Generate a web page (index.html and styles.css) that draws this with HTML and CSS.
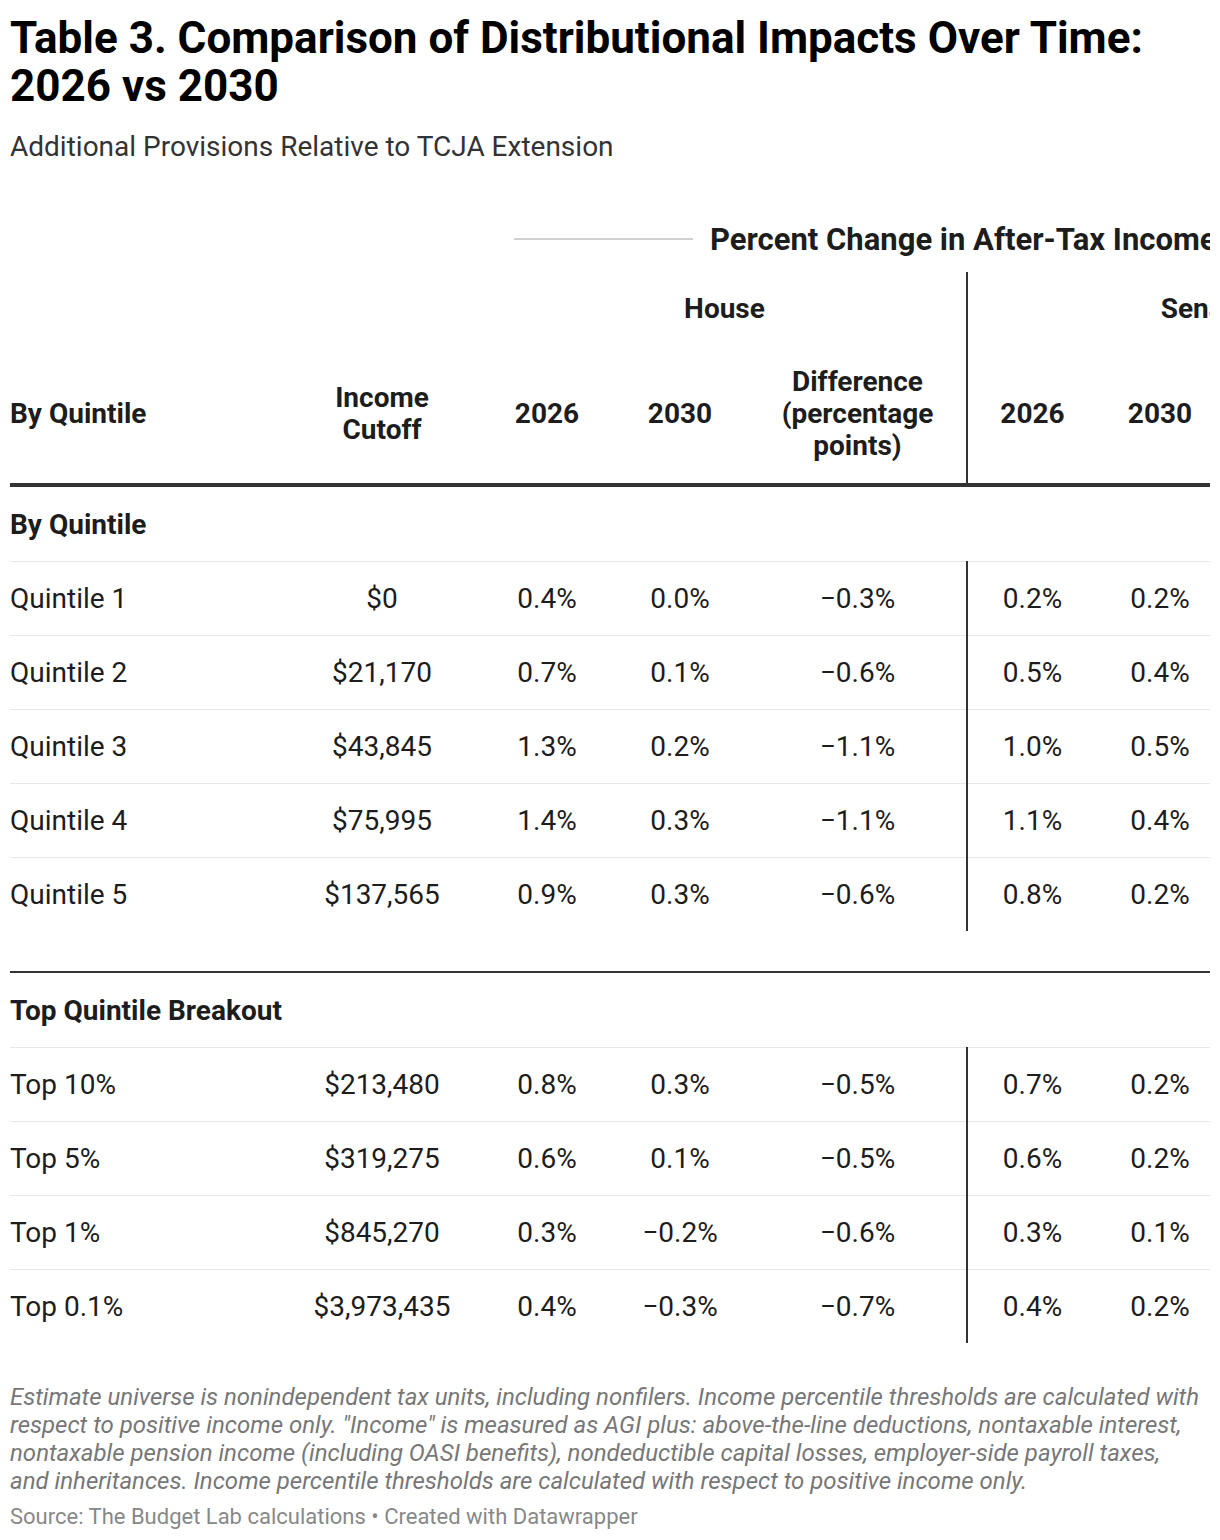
FILE: index.html
```html
<!DOCTYPE html>
<html lang="en">
<head>
<meta charset="utf-8">
<title>Table 3</title>
<link rel="stylesheet" href="styles.css">
</head>
<body>
<div class="chart">
  <h1 class="title">Table 3. Comparison of Distributional Impacts Over Time: 2026 vs 2030</h1>
  <p class="subtitle">Additional Provisions Relative to TCJA Extension</p>
  <div class="table-wrap">
    <table class="dt">
      <colgroup>
        <col class="w1"><col class="w2"><col class="w3"><col class="w4"><col class="w5"><col class="w6"><col class="w7"><col class="w8">
      </colgroup>
      <thead>
        <tr class="spanrow">
          <th colspan="2"></th>
          <th colspan="6" class="spanner"><div class="spanner-inner"><span class="sline sline-l"></span><span class="stext">Percent Change in After-Tax Income</span><span class="sline sline-r"></span></div></th>
        </tr>
        <tr class="grouprow">
          <th colspan="2"></th>
          <th colspan="3" class="c">House</th>
          <th colspan="3" class="c div">Senate</th>
        </tr>
        <tr class="colrow">
          <th class="l">By Quintile</th>
          <th class="c">Income<br>Cutoff</th>
          <th class="c">2026</th>
          <th class="c">2030</th>
          <th class="c">Difference<br>(percentage<br>points)</th>
          <th class="c div">2026</th>
          <th class="c">2030</th>
          <th class="c">Difference<br>(percentage<br>points)</th>
        </tr>
      </thead>
      <tbody>
        <tr class="sec"><td colspan="8">By Quintile</td></tr>
        <tr><td class="l">Quintile 1</td><td>$0</td><td>0.4%</td><td>0.0%</td><td>−0.3%</td><td class="div">0.2%</td><td>0.2%</td><td>0.0%</td></tr>
        <tr><td class="l">Quintile 2</td><td>$21,170</td><td>0.7%</td><td>0.1%</td><td>−0.6%</td><td class="div">0.5%</td><td>0.4%</td><td>−0.1%</td></tr>
        <tr><td class="l">Quintile 3</td><td>$43,845</td><td>1.3%</td><td>0.2%</td><td>−1.1%</td><td class="div">1.0%</td><td>0.5%</td><td>−0.5%</td></tr>
        <tr><td class="l">Quintile 4</td><td>$75,995</td><td>1.4%</td><td>0.3%</td><td>−1.1%</td><td class="div">1.1%</td><td>0.4%</td><td>−0.7%</td></tr>
        <tr class="last"><td class="l">Quintile 5</td><td>$137,565</td><td>0.9%</td><td>0.3%</td><td>−0.6%</td><td class="div">0.8%</td><td>0.2%</td><td>−0.6%</td></tr>
        <tr class="gap"><td colspan="8"></td></tr>
        <tr class="sec sec2"><td colspan="8">Top Quintile Breakout</td></tr>
        <tr><td class="l">Top 10%</td><td>$213,480</td><td>0.8%</td><td>0.3%</td><td>−0.5%</td><td class="div">0.7%</td><td>0.2%</td><td>−0.5%</td></tr>
        <tr><td class="l">Top 5%</td><td>$319,275</td><td>0.6%</td><td>0.1%</td><td>−0.5%</td><td class="div">0.6%</td><td>0.2%</td><td>−0.4%</td></tr>
        <tr><td class="l">Top 1%</td><td>$845,270</td><td>0.3%</td><td>−0.2%</td><td>−0.6%</td><td class="div">0.3%</td><td>0.1%</td><td>−0.2%</td></tr>
        <tr class="last"><td class="l">Top 0.1%</td><td>$3,973,435</td><td>0.4%</td><td>−0.3%</td><td>−0.7%</td><td class="div">0.4%</td><td>0.2%</td><td>−0.2%</td></tr>
      </tbody>
    </table>
  </div>
  <p class="notes">Estimate universe is nonindependent tax units, including nonfilers. Income percentile thresholds are calculated with respect to positive income only. "Income" is measured as AGI plus: above-the-line deductions, nontaxable interest, nontaxable pension income (including OASI benefits), nondeductible capital losses, employer-side payroll taxes, and inheritances. Income percentile thresholds are calculated with respect to positive income only.</p>
  <p class="source">Source: The Budget Lab calculations • Created with Datawrapper</p>
</div>
</body>
</html>
```

FILE: styles.css
```css
html, body {
  margin: 0;
  padding: 0;
  background: #fff;
}
body {
  font-family: Roboto, "Liberation Sans", sans-serif;
  color: #1d1d1d;
}
.chart {
  width: 1200px;
  padding: 14px 10px 0 10px;
  overflow: hidden;
}
.title {
  margin: 0;
  font-size: 44px;
  line-height: 48px;
  font-weight: 700;
  color: #000;
}
.subtitle {
  margin: 20px 0 0 0;
  font-size: 28px;
  line-height: 34px;
  color: #333;
}
.table-wrap {
  margin-top: 42px;
  width: 1200px;
  overflow: hidden;
}
.dt {
  width: 1431px;
  table-layout: fixed;
  border-collapse: collapse;
  font-size: 28px;
  color: #1d1d1d;
}
.w1 { width: 271px; }
.w2 { width: 202px; }
.w3 { width: 128px; }
.w4 { width: 138px; }
.w5 { width: 218px; }
.w6 { width: 130px; }
.w7 { width: 126px; }
.w8 { width: 218px; }
.dt th {
  font-weight: 700;
  padding: 0;
  vertical-align: middle;
}
.dt th.l, .dt td.l { text-align: left; }
.dt th.c, .dt td { text-align: center; }
.spanrow th { height: 66px; }
.spanner-inner {
  display: flex;
  align-items: center;
  gap: 17px;
  padding-left: 31px;
  padding-right: 31px;
  font-size: 31px;
}
.sline {
  height: 2px;
  background: #d0d0d0;
}
.sline-l { width: 179px; flex: none; }
.sline-r { flex: 1; }
.stext { white-space: nowrap; }
.grouprow th { height: 73px; }
.colrow th {
  height: 138px;
  line-height: 32px;
  border-bottom: 4px solid #333;
}
.div { border-left: 2px solid #333; }
.dt td {
  height: 73px;
  padding: 0;
  border-bottom: 1px solid #e8e8e8;
  vertical-align: middle;
}
.dt tr.sec td {
  text-align: left;
  font-weight: 700;
  height: 74px;
}
.dt tr.last td { border-bottom: none; }
.dt tr.gap td {
  height: 40px;
  border-bottom: 2px solid #333;
}
.notes {
  margin: 40px 0 0 0;
  max-width: 1191px;
  font-size: 24px;
  line-height: 28px;
  font-style: italic;
  color: #777;
}
.source {
  margin: 8px 0 0 0;
  font-size: 22px;
  line-height: 28px;
  color: #888;
}
```
